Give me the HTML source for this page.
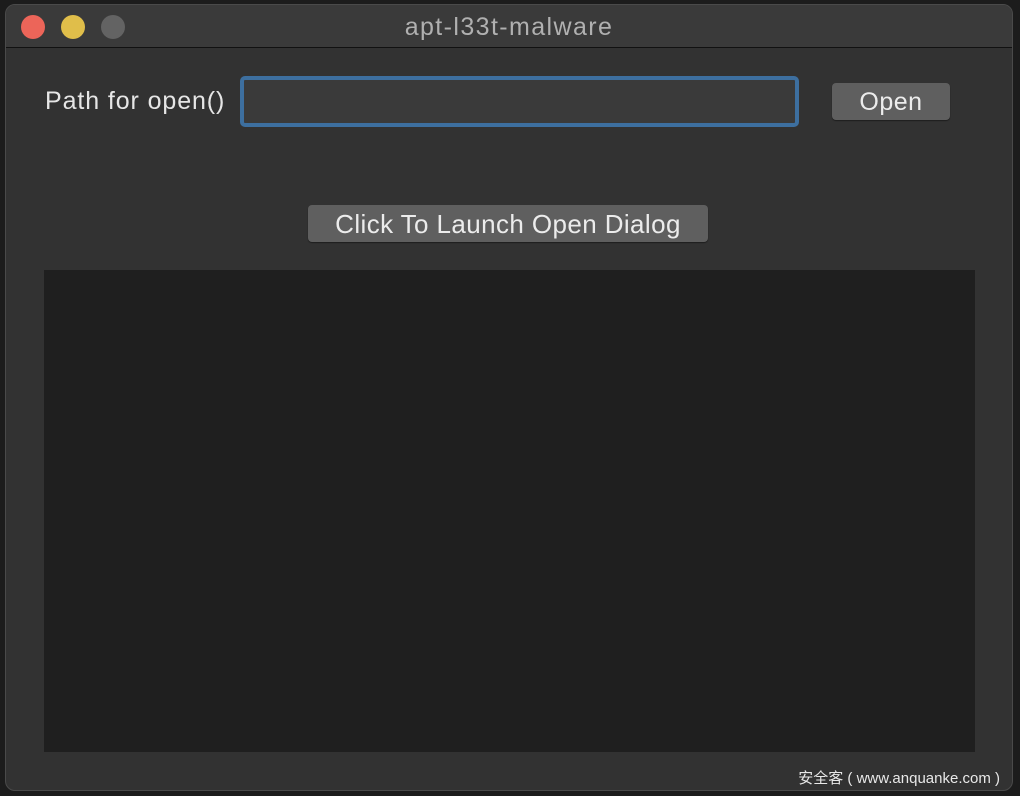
<!DOCTYPE html>
<html><head><style>
html,body{margin:0;padding:0;width:1020px;height:796px;background:#1c1c1c;overflow:hidden;font-family:"Liberation Sans","Noto Sans CJK SC",sans-serif;}
.win{position:absolute;left:5px;top:4px;width:1008px;height:787px;background:#323232;border-radius:10px;border:1px solid #4a4a4a;box-sizing:border-box;overflow:hidden;}
.title{position:absolute;left:0;top:0;right:0;height:42px;background:#3a3a3a;border-bottom:1px solid #111;text-align:center;line-height:44px;color:#b0b0b0;font-size:25px;letter-spacing:1.4px;}
.dot{position:absolute;top:10px;width:24px;height:24px;border-radius:50%;}
.lbl{position:absolute;left:39px;top:82px;color:#e6e6e6;font-size:25px;letter-spacing:0.9px;}
.inp{position:absolute;left:234px;top:71px;width:559px;height:51px;box-sizing:border-box;border:4px solid #3d6f9f;border-radius:5px;background:#3a3a3a;}
.btn{position:absolute;background:#5f5f5f;border-radius:4px;color:#ececec;text-align:center;box-shadow:0 1px 1px #1e1e1e;}
.log{position:absolute;left:38px;top:265px;width:931px;height:482px;background:#1f1f1f;}
.wm{position:absolute;right:12px;top:762px;color:#e8e8e8;font-size:15px;}
</style></head><body>
<div class="win">
<div class="title">apt-l33t-malware</div>
<div class="dot" style="left:15px;background:#ec6559"></div>
<div class="dot" style="left:55px;background:#e0be4a"></div>
<div class="dot" style="left:95px;background:#636363"></div>
<div class="lbl">Path for open()</div>
<div class="inp"></div>
<div class="btn" style="left:826px;top:78px;width:118px;height:37px;line-height:38px;font-size:25px;letter-spacing:0.5px;">Open</div>
<div class="btn" style="left:302px;top:200px;width:400px;height:37px;line-height:38px;font-size:26px;letter-spacing:0.4px;">Click To Launch Open Dialog</div>
<div class="log"></div>
<div class="wm">安全客 ( www.anquanke.com )</div>
</div>
</body></html>
